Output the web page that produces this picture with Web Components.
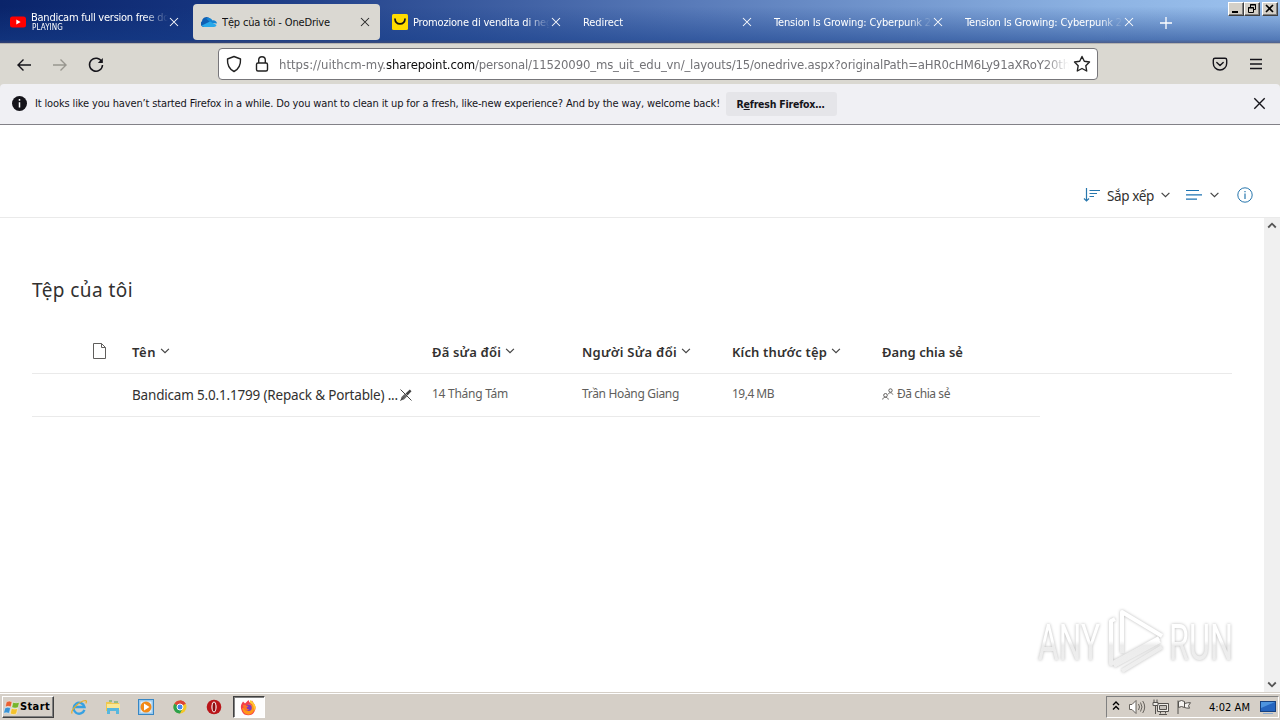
<!DOCTYPE html>
<html lang="vi">
<head>
<meta charset="utf-8">
<title>Tệp của tôi - OneDrive</title>
<style>
  html, body { margin: 0; height: 100%; overflow: hidden; }
  body { background: #fff; }
</style>
</head>
<body>
<desktop-screen></desktop-screen>
<script>
const UI = '"DejaVu Sans Condensed", "DejaVu Sans", "Liberation Sans", sans-serif';
const WEB = '"Noto Sans", "Open Sans", sans-serif';

const chevron = (w = 9, h = 6, color = '#444') =>
  `<svg width="${w}" height="${h}" viewBox="0 0 9 6" fill="none" stroke="${color}" stroke-width="1.2"><path d="M.6.8 4.5 4.7 8.4.8"/></svg>`;
const cross = (size, color) =>
  `<svg width="${size}" height="${size}" viewBox="0 0 10 10" fill="none" stroke="${color}" stroke-width="1.05"><path d="M1 1l8 8M9 1l-8 8"/></svg>`;

const favicons = {
  youtube: `<svg width="16" height="16" viewBox="0 0 16 16"><rect y="2.5" width="16" height="11" rx="2.5" fill="#f00"/><path d="M6.3 5.5v5l4.3-2.5z" fill="#fff"/></svg>`,
  onedrive: `<svg width="16" height="16" viewBox="0 0 16 16"><path d="M3.2 13A3.2 3.2 0 0 1 1 7.200 4.500 4.500 0 0 1 9.300 5.100L12 9l-5 4z" fill="#0f5fb4"/><path d="M5 4.600a4.500 4.500 0 0 1 6.500 1.900A3.500 3.500 0 0 1 16 9.500L10 9z" fill="#1384d4"/><path d="M.8 11.500 9 7.500 15.600 11a3 3 0 0 1-2.600 2H3.200a3 3 0 0 1-2.400-1.500z" fill="#28a8ea"/></svg>`,
  shop: `<svg width="16" height="16" viewBox="0 0 16 16"><rect width="16" height="16" rx="1.500" fill="#ffdc00"/><path d="M3 5.200c.6 6.300 9.400 6.300 10 0" fill="none" stroke="#151515" stroke-width="1.700" stroke-linecap="round"/></svg>`,
};

function define(name, markup, setup) {
  customElements.define(name, class extends HTMLElement {
    constructor() {
      super();
      this.attachShadow({mode: 'open'});
      this.shadowRoot.innerHTML = typeof markup === 'function' ? markup(this) : markup;
    }
    connectedCallback() {
      if (setup) setup(this);
    }
  });
}

define('desktop-screen', `
  <style>
    :host { display: flex; flex-direction: column; width: 1280px; height: 720px; overflow: hidden; position: relative; }
    drive-page { flex: 1; min-height: 0; }
    run-watermark { position: absolute; left: 1032px; top: 604px; }
  </style>
  <tab-strip></tab-strip>
  <nav-toolbar></nav-toolbar>
  <notification-bar></notification-bar>
  <drive-page></drive-page>
  <task-bar></task-bar>
  <run-watermark></run-watermark>
`);

define('tab-strip', `
  <style>
    :host {
      display: flex; height: 43px; box-sizing: border-box; position: relative;
      background: linear-gradient(180deg, transparent 15%, rgba(22, 62, 138, .55) 92%, rgba(60, 72, 115, .8)), linear-gradient(90deg, #0a246a 0, #163580 220px, #5a7cba 700px, #8db3e3 1100px, #9cc2ee 1280px);
    }
    .new { width: 14px; height: 14px; margin: 16px 0 0 13px; }
    .new svg { display: block; }
    .controls { display: flex; position: absolute; right: 2px; top: 2px; }
    .controls span {
      width: 16px; height: 14px; box-sizing: border-box; background: #d4d0c8;
      border: 1px solid; border-color: #fff #404040 #404040 #fff; box-shadow: inset -1px -1px #808080;
    }
    .controls span:last-child { margin-left: 2px; }
    .controls svg { display: block; }
  </style>
  <browser-tab icon="youtube" sub="PLAYING" fit="138">Bandicam full version free do</browser-tab>
  <browser-tab icon="onedrive" active fit="108">Tệp của tôi - OneDrive</browser-tab>
  <browser-tab icon="shop" fit="139">Promozione di vendita di neg</browser-tab>
  <browser-tab fit="40">Redirect</browser-tab>
  <browser-tab fit="157">Tension Is Growing: Cyberpunk 2</browser-tab>
  <browser-tab fit="157">Tension Is Growing: Cyberpunk 2</browser-tab>
  <div class="new"><svg width="14" height="14" viewBox="0 0 14 14" stroke="#fff" stroke-width="1.300"><path d="M7 1v12M1 7h12"/></svg></div>
  <div class="controls">
    <span><svg width="14" height="12"><path d="M3 8h6v2H3z"/></svg></span>
    <span><svg width="14" height="12" fill="none" stroke="#000"><path d="M5.500 4V1.500h5v5H9M5 2h6M3.500 4.500h5v5h-5zM3 5h6"/></svg></span>
    <span><svg width="14" height="12" stroke="#000" stroke-width="1.600"><path d="M3 2l7 7M10 2l-7 7"/></svg></span>
  </div>
`);

define('browser-tab', el => `
  <style>
    :host { display: flex; align-items: center; box-sizing: border-box; width: 187px; height: 36px; margin: 4px 2px 3px; padding: 0 9px 0 8px; color: #fff; font: 11px/14px ${UI}; border-radius: 4px; }
    :host([active]) { background: #dad8d2; color: #111; }
    .icon { width: 16px; height: 16px; margin-right: 5px; flex: none; }
    .icon svg { display: block; }
    .text { flex: 1; min-width: 0; overflow: hidden; white-space: nowrap; -webkit-mask-image: linear-gradient(90deg, #000 calc(100% - 24px), transparent); mask-image: linear-gradient(90deg, #000 calc(100% - 24px), transparent); }
    :host([active]) .text { -webkit-mask-image: none; mask-image: none; }
    .title { display: block; padding-top: 2px; }
    .sub { display: block; font-size: 8px; line-height: 8px; height: 9px; padding-left: 1px; }
    :host([sub]) .text { margin-top: -1px; }
    :host([sub]) .title { line-height: 13px; padding-top: 0; }
    .close { width: 12px; height: 12px; display: grid; place-items: center; flex: none; }
  </style>
  ${el.hasAttribute('icon') ? `<span class="icon">${favicons[el.getAttribute('icon')]}</span>` : ''}
  <span class="text"><span class="title"><fit-text width="${el.getAttribute('fit')}">${el.textContent}</fit-text></span>
  ${el.hasAttribute('sub') ? `<span class="sub"><fit-text width="31">${el.getAttribute('sub')}</fit-text></span>` : ''}</span>
  <span class="close">${cross(10, el.hasAttribute('active') ? '#222' : '#fff')}</span>
`);

define('nav-toolbar', `
  <style>
    :host { display: flex; align-items: center; box-sizing: border-box; height: 41px; background: #dad8d1; padding: 0 16px 0 14px; border-top: 1px solid #b5b3b0; }
    svg { display: block; flex: none; }
    .nav { display: flex; gap: 16px; width: 204px; margin-top: 1px; }
    .url { display: flex; align-items: center; box-sizing: border-box; width: 880px; height: 32px; background: #fff; border: 1px solid #77767a; border-radius: 4px; padding: 0 6px 0 7px; font: 13px/20px ${UI}; color: #737377; }
    .address { width: 794px; margin: 0 1px 0 9px; padding-top: 1px; white-space: nowrap; overflow: hidden; -webkit-mask-image: linear-gradient(90deg, #000 765px, transparent 790px); mask-image: linear-gradient(90deg, #000 765px, transparent 790px); }
    b { font-weight: 400; color: #0c0c0d; }
    .tools { display: flex; gap: 20px; margin-left: auto; }
  </style>
  <div class="nav">
    <svg width="20" height="20" viewBox="0 0 20 20" fill="none" stroke="#15141a" stroke-width="1.400"><path d="M17 10H3.500M9.500 4.500 4 10l5.500 5.500"/></svg>
    <svg width="20" height="20" viewBox="0 0 20 20" fill="none" stroke="#98968f" stroke-width="1.400"><path d="M3 10h13.500M10.500 4.500 16 10l-5.500 5.500"/></svg>
    <svg width="20" height="20" viewBox="0 0 20 20" fill="none" stroke="#15141a" stroke-width="1.500"><path d="M15.800 6.800A6.500 6.500 0 1 0 16.500 10"/><path d="M16.800 3v5h-5z" fill="#15141a" stroke="none"/></svg>
  </div>
  <div class="url">
    <svg width="16" height="18" viewBox="0 0 16 18" fill="none" stroke="#222" stroke-width="1.400"><path d="M8 1.500 14.500 4c.3 5-1.500 10-6.500 12.500C3 14 1.200 9 1.500 4z" stroke-linejoin="round"/></svg>
    <svg style="margin-left:12px" width="16" height="18" viewBox="0 0 16 18" fill="none" stroke="#222" stroke-width="1.400"><rect x="2.500" y="8" width="11" height="8" rx="1.500"/><path d="M4.700 8V5a3.300 3.300 0 0 1 6.600 0v3"/></svg>
    <div class="address"><fit-text width="107">https://uithcm-my.</fit-text><b><fit-text width="89">sharepoint.com</fit-text></b><fit-text width="595">/personal/11520090_ms_uit_edu_vn/_layouts/15/onedrive.aspx?originalPath=aHR0cHM6Ly91aXRoY20th</fit-text></div>
    <svg width="18" height="18" viewBox="0 0 18 18" fill="none" stroke="#222" stroke-width="1.400" stroke-linejoin="round"><path d="M9 1.500l2.300 4.700 5.200.8-3.700 3.700.9 5.300L9 13.500 4.300 16l.9-5.300L1.500 7l5.200-.8z"/></svg>
  </div>
  <div class="tools">
    <svg width="16" height="16" viewBox="0 0 16 16" fill="none" stroke="#15141a" stroke-width="1.400" stroke-linecap="round" stroke-linejoin="round"><path d="M3 2.300h10c1 0 1.700.6 1.700 1.600v3.300A6.700 6.700 0 0 1 8 14a6.700 6.700 0 0 1-6.700-6.800V3.900c0-1 .7-1.600 1.700-1.600zM4.800 6.500 8 9.600l3.200-3.100"/></svg>
    <svg width="16" height="16" viewBox="0 0 16 16" stroke="#15141a" stroke-width="1.300"><path d="M2 3.500h12M2 8h12M2 12.500h12"/></svg>
  </div>
`);

define('notification-bar', `
  <style>
    :host { display: block; box-sizing: border-box; height: 41px; background: #dad8d1; }
    .bar { display: flex; align-items: center; box-sizing: border-box; height: 41px; padding: 0 14px 1px 12px; background: #f0f0f4; border-bottom: 1px solid #828187; border-radius: 4px 4px 0 0; font: 11px/16px ${UI}; color: #15141a; }
    .msg { margin-left: 8px; padding-top: 1px; white-space: nowrap; }
    button { margin-left: 6px; width: 111px; height: 24px; padding: 0 2px 0 0; border: 0; border-radius: 3px; background: #e5e5e9; color: #15141a; font: bold 10.500px/16px ${UI}; }
    .x { margin-left: auto; height: 13px; }
    svg { display: block; flex: none; }
  </style>
  <div class="bar">
    <svg width="15" height="15" viewBox="0 0 15 15"><circle cx="7.500" cy="7.500" r="7.500" fill="#15141a"/><path d="M7.500 3v1.700M7.500 6.300v5.200" stroke="#fff" stroke-width="1.500"/></svg>
    <span class="msg"><fit-text width="685">It looks like you haven’t started Firefox in a while. Do you want to clean it up for a fresh, like-new experience? And by the way, welcome back!</fit-text></span>
    <button><fit-text width="88">R<u>e</u>fresh Firefox…</fit-text></button>
    <span class="x">${cross(13, '#15141a')}</span>
  </div>
`);

define('drive-page', `
  <style>
    :host { display: flex; flex-direction: column; background: #fff; font-family: ${WEB}; color: #323130; }
    .body { flex: 1; min-height: 0; display: flex; }
    main { flex: 1; min-width: 0; padding: 59px 32px 0; }
    h1 { margin: 0; height: 28px; font-size: 19px; font-weight: 400; line-height: 26px; }
    file-list { margin-top: 25px; }
  </style>
  <command-bar></command-bar>
  <div class="body">
    <main>
      <h1><fit-text width="101">Tệp của tôi</fit-text></h1>
      <file-list></file-list>
    </main>
    <scroll-bar></scroll-bar>
  </div>
`);

define('command-bar', `
  <style>
    :host { display: flex; align-items: center; justify-content: flex-end; box-sizing: border-box; height: 93px; padding: 49px 27px 1px 0; border-bottom: 1px solid #eaeaea; font-size: 13.500px; line-height: 20px; }
    svg { display: block; }
    .sort { margin-left: 7px; margin-right: 7px; padding-top: 2px; }
    .view { margin-left: 16px; margin-right: 8px; }
    .info { margin-left: 18px; }
  </style>
  <svg width="17" height="16" viewBox="0 0 17 16" fill="none" stroke="#2877ad" stroke-width="1.200"><path d="M3.500 1v13M1 11.500 3.500 14 6 11.500M6.500 3.500H17M6.500 6.500H14M6.500 9.500H11"/></svg>
  <span class="sort"><fit-text width="47">Sắp xếp</fit-text></span>
  ${chevron()}
  <svg class="view" width="16" height="12" viewBox="0 0 16 12" stroke="#1c73b2" stroke-width="1.200"><path d="M0 1.500h13M0 5.800h16M0 10.200h11"/></svg>
  ${chevron()}
  <svg class="info" width="16" height="16" viewBox="0 0 16 16" fill="none" stroke="#2877ad"><circle cx="8" cy="8" r="7.200"/><path d="M8 6.500V12M8 4v1.300" stroke-width="1.200"/></svg>
`);

define('file-list', `
  <style>
    :host { display: block; }
    .row { display: grid; grid-template-columns: 60px 40px 300px 150px 150px 150px 1fr; align-items: center; box-sizing: border-box; white-space: nowrap; border-bottom: 1px solid #eaeaea; }
    .head { height: 44px; font-size: 13px; font-weight: 600; line-height: 20px; }
    .file { width: 1008px; height: 43px; font-size: 12px; line-height: 20px; color: #605e5c; }
    .head > span { display: flex; align-items: center; gap: 4px; }
    .head svg { margin-top: -1px; }
    .name { grid-column: 3; display: flex; align-items: center; font-size: 13.500px; color: #323130; }
    .file > span:not(.name) { padding-bottom: 2px; }
    .name svg { margin-left: 1px; }
    .shared { display: flex; align-items: center; gap: 3px; }
    svg { display: block; }
  </style>
  <div class="row head">
    <span style="grid-column:2"><svg width="15" height="17" viewBox="0 0 15 17" fill="none" stroke="#605e5c"><path d="M1.500.5h8l4 4v11h-12zM9.500.5v4h4"/></svg></span>
    <span><fit-text width="24">Tên</fit-text>${chevron(10, 6)}</span>
    <span><fit-text width="69">Đã sửa đổi</fit-text>${chevron(10, 6)}</span>
    <span><fit-text width="95">Người Sửa đổi</fit-text>${chevron(10, 6)}</span>
    <span><fit-text width="95">Kích thước tệp</fit-text>${chevron(10, 6)}</span>
    <span><fit-text width="81">Đang chia sẻ</fit-text></span>
  </div>
  <div class="row file">
    <span class="name"><fit-text width="266">Bandicam 5.0.1.1799 (Repack &amp; Portable) ...</fit-text>
      <svg width="14" height="14" viewBox="0 0 14 14" stroke="#444"><path d="M1.300 12.700 2.500 9l3-3 2.500 2.500-3 3z" fill="#666" stroke="none"/><path d="M6.500 5.500 10.800 1.500l1.700 1.700L8.500 7.500z" fill="#444" stroke="none"/><path d="M1.500 1.500l11 11"/><path d="M1.500 12.500l3-3"/></svg>
    </span>
    <span><fit-text width="76">14 Tháng Tám</fit-text></span>
    <span><fit-text width="97">Trần Hoàng Giang</fit-text></span>
    <span><fit-text width="42">19,4 MB</fit-text></span>
    <span class="shared"><svg width="12" height="12" viewBox="0 0 12 12" fill="none" stroke="#605e5c"><circle cx="8.500" cy="2.500" r="1.700"/><path d="M6.300 6.200c.5-2 3.700-2 4.500.3M.7 11.500c.3-3 5-3 5.600 0"/><circle cx="3.500" cy="7.300" r="1.800"/></svg><fit-text width="53">Đã chia sẻ</fit-text></span>
  </div>
`);

define('scroll-bar', `
  <style>
    :host { display: flex; flex-direction: column; justify-content: space-between; align-items: center; box-sizing: border-box; width: 16px; padding: 4px 0; background: #f0f0f0; }
    svg { display: block; fill: none; stroke: #555; stroke-width: 1.800; }
  </style>
  <svg width="10" height="7"><path d="M1.200 5.500 5 1.700l3.800 3.800"/></svg>
  <svg width="10" height="7"><path d="M1.200 1.500 5 5.300l3.800-3.800"/></svg>
`);

define('task-bar', `
  <style>
    :host { display: flex; box-sizing: border-box; height: 28px; padding: 2px 0 1px 2px; background: #d5cfc7; border-top: 1px solid #d5cfc7; box-shadow: inset 0 1px #fff; font: 11px/14px ${UI}; color: #000; }
    svg { display: block; flex: none; }
    .start { display: flex; align-items: center; box-sizing: border-box; width: 52px; height: 22px; margin-top: 1px; font-weight: bold; border: 1px solid; border-color: #fff #404040 #404040 #fff; box-shadow: inset -1px -1px #808080; }
    .apps { display: flex; align-items: center; gap: 17.700px; margin-left: 17px; height: 24px; }
    .running { width: 32px; height: 22px; box-sizing: border-box; margin: 1px 0 0 11px; display: grid; place-items: center; background: #fdfdfd; border: 1px solid; border-color: #404040 #fff #fff #404040; box-shadow: inset 1px 1px #808080; }
    .tray { display: flex; align-items: center; box-sizing: border-box; width: 173px; height: 22px; margin: 1px 1px 0 auto; padding-left: 5px; border: 1px solid; border-color: #808080 #fff #fff #808080; }
    .clock { margin-left: 17px; width: 41px; padding-top: 1px; }
  </style>
  <div class="start"><svg width="17" height="17" viewBox="0 0 15 15" stroke="#fff" stroke-width=".4"><path d="M3 2.500q2.500-1.300 5 0L7 7q-2.500-1.200-5 .1z" fill="#e96132"/><path d="M8.700 2.800q2.800 1.200 5.800 0L13.400 7.500q-2.700 1.200-5.600-.1z" fill="#76b52c"/><path d="M1.700 7.900q2.500-1.300 5-.1L5.500 12.700q-2.500-1.300-5-.1z" fill="#3a93d5"/><path d="M7.500 8.200q2.800 1.200 5.500.1l-1.200 4.900q-2.800 1.200-5.400-.1z" fill="#f4c22c"/></svg><fit-text width="30">Start</fit-text></div>
  <div class="apps">
    <svg width="16" height="16" viewBox="0 0 16 16" fill="none"><path d="M13.400 10.800A5.500 5.500 0 1 1 13.500 8H3" stroke="#36a1e2" stroke-width="2.300"/><path d="M1.200 14.500C-1 12 8 2 14.500 1.500c1.400 0 1 1.800.3 2.900" stroke="#e8ae27" stroke-width="1.200"/></svg>
    <svg width="16" height="16" viewBox="0 0 16 16"><path d="M1 3h5l1 1h7v8H1z" fill="#efc84f"/><path d="M2 5h13v6H2z" fill="#f9e795"/><path d="M2 9h12v6h-3v-3H5v3H2z" fill="#57b7de"/><path d="M4 2h3M9 3h4" stroke="#56a64b"/></svg>
    <svg width="16" height="16" viewBox="0 0 16 16"><rect x=".5" y=".5" width="15" height="15" fill="#9ac9ed" stroke="#3686c4"/><rect x="2.500" y="2.500" width="11" height="11" fill="#e4f2fc"/><circle cx="8" cy="8" r="5.500" fill="#f28a18"/><path d="M6 4.500v7L11.500 8z" fill="#fff"/></svg>
    <svg width="16" height="16" viewBox="0 0 16 16"><circle cx="8" cy="8" r="6.500" fill="#f5c727"/><path d="M8 8 2.300 4.800A6.500 6.500 0 0 1 13.700 4.800z" fill="#dd4437"/><path d="M8 8 2.300 4.700A6.500 6.500 0 0 0 8 14.500l2.500-5z" fill="#2ca14b"/><path d="M8 5h5.700A6.500 6.500 0 0 0 8 1.500z" fill="#dd4437"/><circle cx="8" cy="8" r="3" fill="#4389ed" stroke="#fff"/></svg>
    <svg width="16" height="16" viewBox="0 0 16 16"><circle cx="8" cy="8" r="7.300" fill="#b91519"/><ellipse cx="8" cy="8" rx="2.600" ry="5.400" fill="#fff"/><ellipse cx="8" cy="8" rx="1.500" ry="4.600" fill="#8c0c10"/></svg>
  </div>
  <div class="running"><svg width="17" height="17" viewBox="0 0 17 17"><path d="M1.500 5 3 2.500 5 4.500 8.500 1l1 2.500L12 1.500l2.500 4q2 3.500 0 7A7 7 0 0 1 2 12.500Q0 8.500 1.500 5z" fill="#f43e4b"/><path d="M8 5Q13 5 14.500 9q0 5-5.500 6.800Q3 15.500 2 9l4 .5z" fill="#ff9619"/><path d="M10 1q5 3 5.800 7.500l-1.500 4Q14.500 6 10 4z" fill="#ffcb2e"/><circle cx="8.500" cy="8.800" r="3.300" fill="#8136be"/><path d="M3 6q2-.8 4 .8l1.500.2-2 1.700q.5 2 3 1.800l-3 1.500Q3 11 3 6z" fill="#fc7325"/></svg></div>
  <div class="tray">
    <svg width="8" height="12" viewBox="0 0 8 12" fill="none" stroke="#000" stroke-width="1.400"><path d="M1 4l3-3 3 3M1 8.500l3-3 3 3"/></svg>
    <svg style="margin-left:8px" width="18" height="16" viewBox="0 0 18 16" fill="none" stroke="#66625c"><path d="M1.500 5.500H4l4-4v13l-4-4H1.500z" fill="#fff"/><path d="M10.500 5q2 3 0 6M12.500 3.500q3 4.500 0 9M14.700 2q4 6 0 12"/></svg>
    <svg style="margin-left:6px" width="18" height="17" viewBox="0 0 18 17" fill="#eeece8" stroke="#55524e"><path d="M5.500 4.500h11v8h-11zM8.500 12.500v2M7 15.500h8M13.500 12.500v2"/><path d="M7.500 6.500h7v4h-7z" fill="#c6c2bc"/><path d="M2 .5V3M5 .5V3M1 3.500h5v3H1zM3.500 7v8"/></svg>
    <svg style="margin-left:6px" width="16" height="16" viewBox="0 0 16 16" fill="#f5f3f0" stroke="#55524e"><path d="M2.500 2.500q3-2 6 0v6q-3-2-6 0zM8.500 4.500q3-1 6-.8l-2 3 1 2.500q-3 0-5-.7M2 1.500V15"/></svg>
    <span class="clock"><fit-text width="41">4:02 AM</fit-text></span>
    <svg style="margin-left:10px" width="16" height="15" viewBox="0 0 16 15"><rect x=".5" y="1.500" width="15" height="10" fill="#2565bf" stroke="#17417f"/><path d="M1 2h14L1 8z" fill="#4d94df"/><path d="M3 13.500h10" stroke="#8aaad0"/></svg>
  </div>
`);

define('run-watermark', `
  <style>
    :host { display: flex; align-items: center; width: 208px; height: 74px; }
    svg { display: block; filter: drop-shadow(0 0 1.500px rgba(0, 0, 0, .28)); }
    text { font: 400 50px "Roboto", "Liberation Sans", sans-serif; }
  </style>
  <svg width="208" height="74" viewBox="0 0 208 74">
    <defs><linearGradient id="fade" x1="0" y1="0" x2="0" y2="74" gradientUnits="userSpaceOnUse"><stop offset=".5" stop-color="#fff"/><stop offset=".56" stop-color="#ececec"/><stop offset="1" stop-color="#f0f0f0"/></linearGradient></defs>
    <g fill="url(#fade)"><text x="6" y="56" textLength="62" lengthAdjust="spacingAndGlyphs">ANY</text><text x="137" y="56" textLength="64" lengthAdjust="spacingAndGlyphs">RUN</text></g>
    <g fill="none" stroke="url(#fade)" stroke-width="4" stroke-linejoin="round"><path d="M90 46V8L130 32"/><path d="M83 15l-4 2v43l48-26M90 14v35"/><path d="M82 62 128 37M90 67l40-24"/></g>
  </svg>
`);

// Spreads its text to a set width. Registered last so that every label is laid out already.
define('fit-text', '<style>:host { display: inline-block; white-space: pre; }</style><slot></slot>', el => {
  const count = [...el.textContent.normalize('NFC')].length;
  const diff = Number(el.getAttribute('width')) - el.getBoundingClientRect().width;
  el.style.letterSpacing = `${diff / count}px`;
});
</script>
</body>
</html>
